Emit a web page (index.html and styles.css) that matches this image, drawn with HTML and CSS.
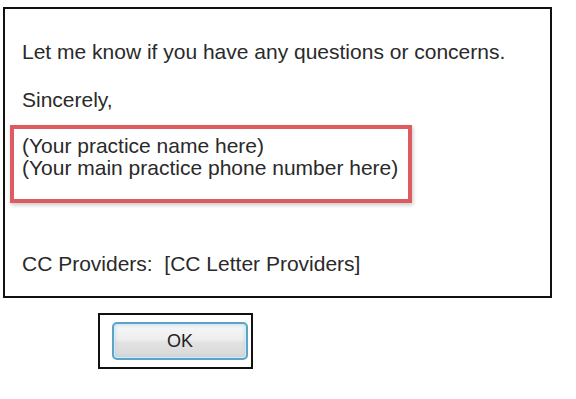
FILE: index.html
```html
<!DOCTYPE html>
<html lang="en">

<head>
  <meta charset="UTF-8">
  <meta name="viewport" content="width=device-width, initial-scale=1.0">
  <title>Letter preview</title>

  <link rel="stylesheet" href="styles.css">
</head>

<body>
  <div class="letter">
    <p class="first">Let me know if you have any questions or concerns.</p>
    <p class="sign">Sincerely,</p>

    <div class="mark">
      <p>(Your practice name here)</p>
      <p>(Your main practice phone number here)</p>
    </div>

    <p class="cc">CC Providers:&nbsp; [CC Letter Providers]</p>
  </div>

  <div class="frame">
    <button class="ok">OK</button>
  </div>
</body>

</html>
```

FILE: styles.css
```css
* {
  margin: 0;
  padding: 0;
  box-sizing: border-box;
}

body {
  font-family: "Liberation Sans", Arial, sans-serif;
  background: #fff;
}

.letter {
  width: 549px;
  height: 291px;
  margin: 7px 0 0 3px;
  padding: 0 0 0 5px;
  border: 2px solid #111;
  color: #2a2a2a;
  font-size: 21px;
}

.letter p {
  line-height: 22px;
}

.first {
  margin-top: 32px;
  padding-left: 12px;
}

.sign {
  margin-top: 26px;
  padding-left: 12px;
}

.mark {
  width: 402px;
  margin-top: 14px;
  padding: 6px 0 20px 8px;
  border: 4px solid #dd5c62;
  box-shadow: 1px 2px 4px rgba(0, 0, 0, 0.22);
}

.cc {
  margin-top: 50px;
  padding-left: 12px;
}

.frame {
  width: 155px;
  height: 56px;
  margin: 15px 0 0 98px;
  padding: 7px 0 0 12px;
  border: 2px solid #111;
}

.ok {
  display: block;
  width: 136px;
  height: 38px;
  border: 2px solid #5fa2c4;
  border-radius: 5px;
  background: linear-gradient(#f8f8f8, #eeeeee 45%, #e2e2e2 55%, #d8d8d8);
  box-shadow: inset 0 0 0 1px #d2ebf7, inset 0 0 3px 2px rgba(160, 210, 235, 0.45);
  font-family: "Liberation Sans", Arial, sans-serif;
  font-size: 18px;
  color: #222;
}
```
